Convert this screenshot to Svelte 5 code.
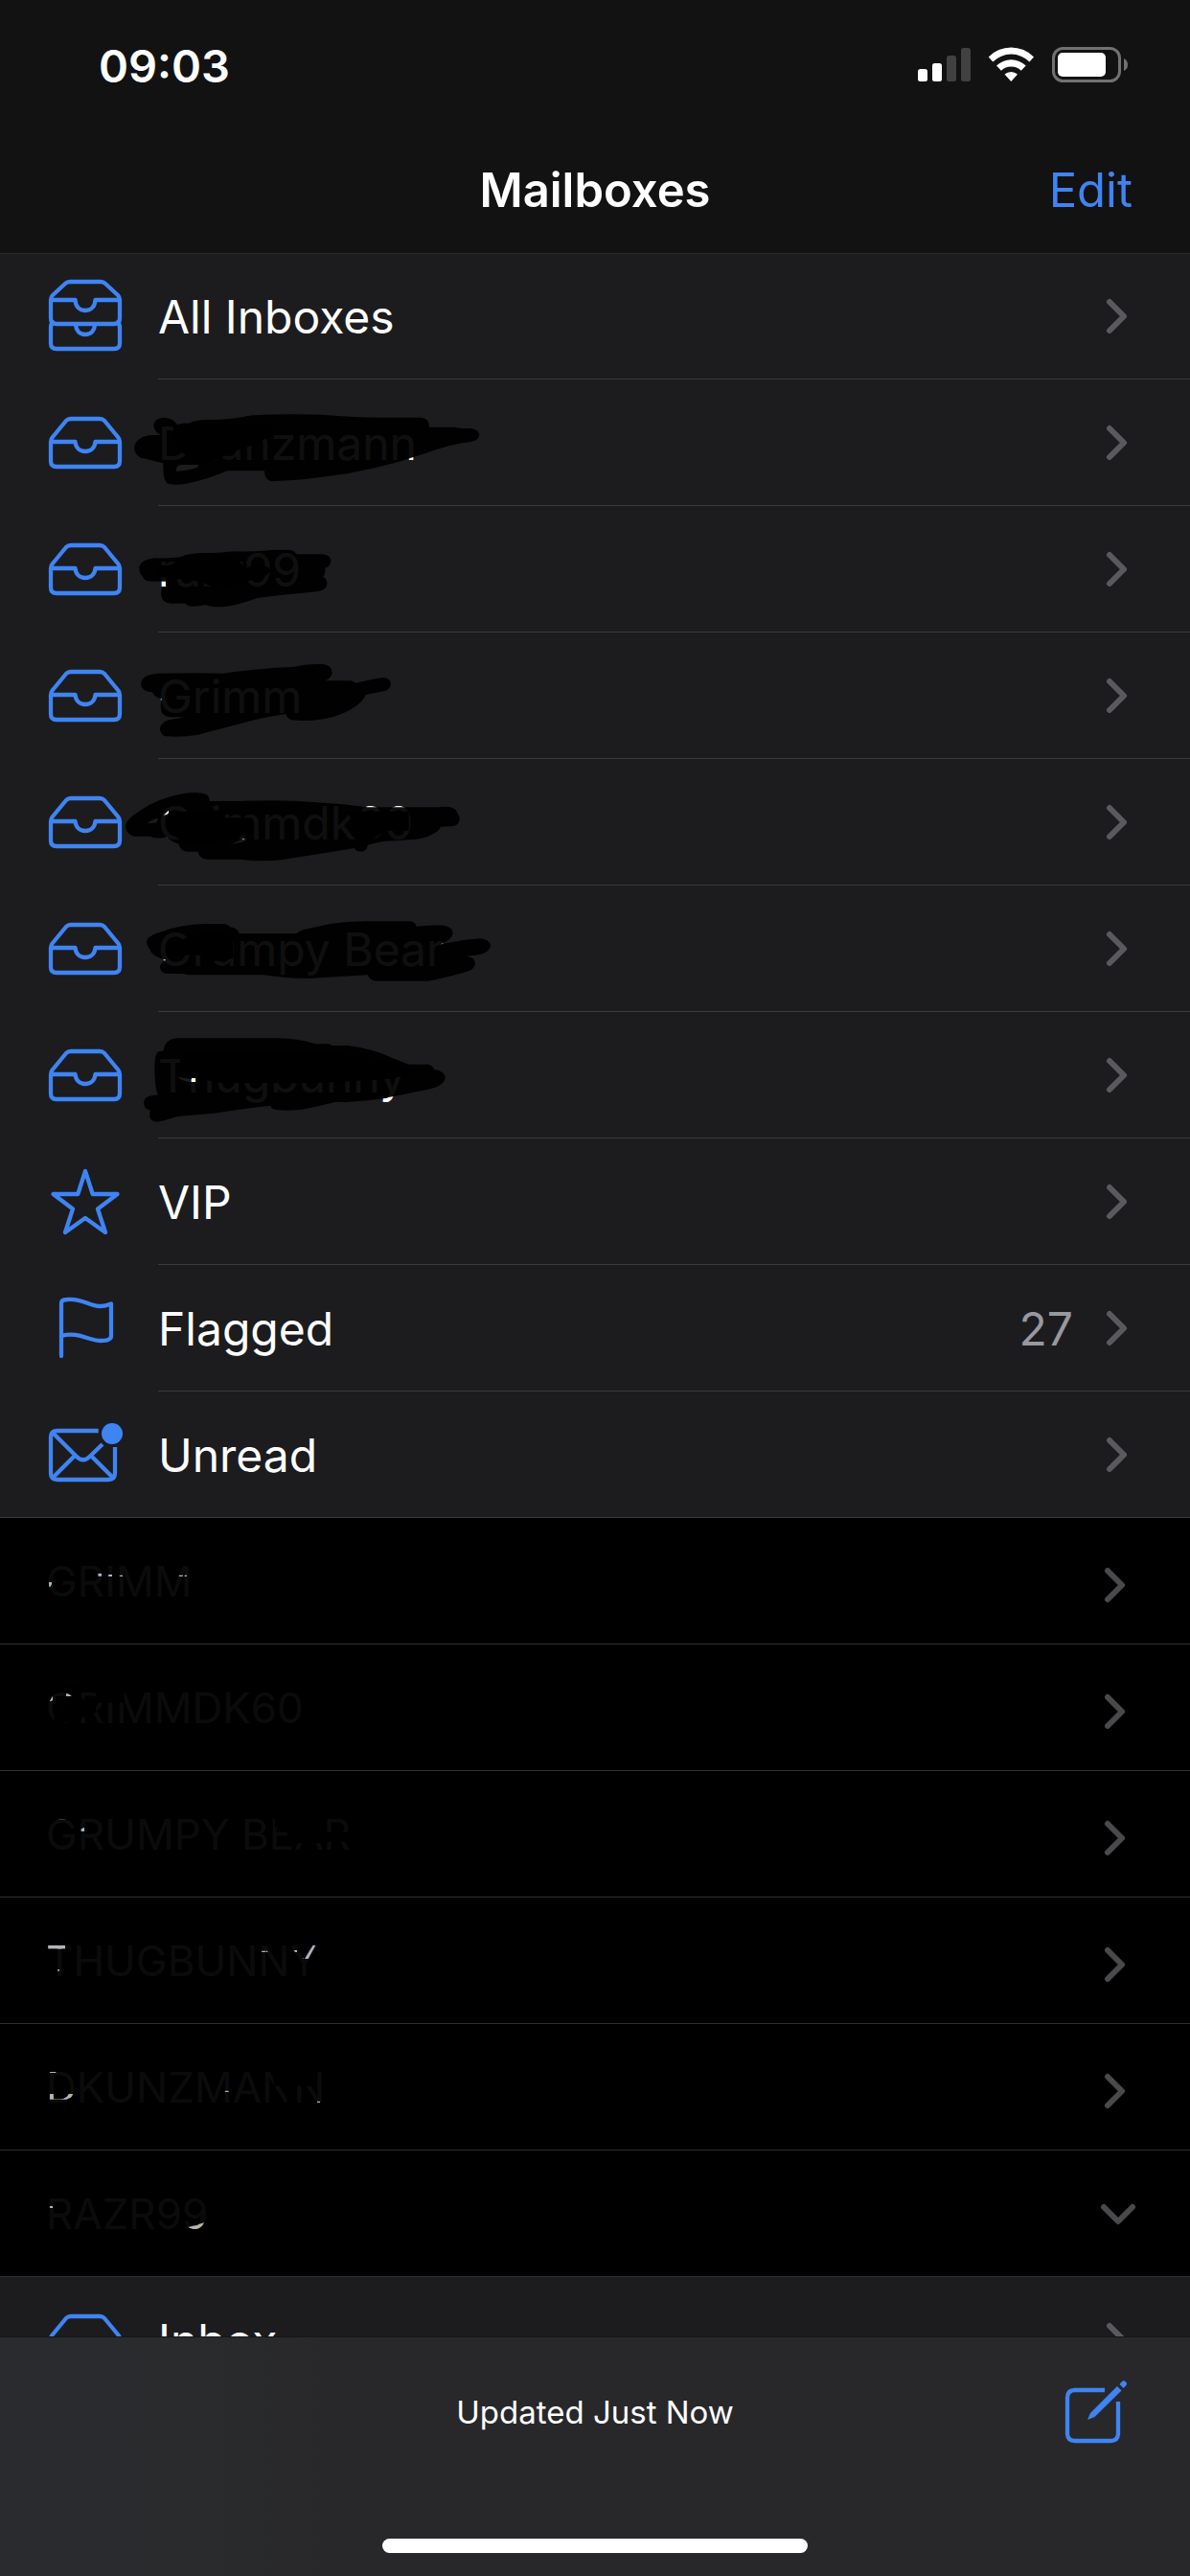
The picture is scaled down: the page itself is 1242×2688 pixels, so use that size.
<script>
	const mailboxes = [
		{ label: 'All Inboxes', icon: 'stack' },
		{
			label: 'Dkunzmann',
			icon: 'tray',
			top: 378,
			scribble:
				'M391 520Q395 498 425 498Q450 498 466 520Q480 512 500 515Q520 505 560 504Q620 505 700 490Q800 484 920 488Q1020 497 1100 497H1230Q1254 500 1254 527H1335Q1345 532 1385 531Q1410 535 1411 552Q1408 570 1380 574Q1320 580 1240 610Q1080 665 930 682Q850 694 760 697Q738 692 738 664H622Q560 690 500 703Q470 711 435 704Q420 695 421 640Q370 627 350 623Q330 610 330 590Q335 560 375 553Q400 552 415 551Q393 545 391 520ZM462 665Q460 645 480 645H530V652Q500 665 462 665Z',
			patch: 'M450 520H790Q760 570 650 600Q600 630 530 640Q480 610 465 590Z'
		},
		{
			label: 'razr99',
			icon: 'tray',
			top: -6,
			scribble:
				'M346 185Q352 160 400 157Q450 158 480 152Q500 140 560 141Q600 142 640 136Q720 137 760 132Q800 130 820 132Q835 136 837 145H920Q945 147 946 165Q945 185 928 188Q930 205 922 215Q936 225 934 240Q930 260 900 262Q800 272 715 282Q640 310 600 310Q565 310 555 303Q530 309 510 308Q495 306 490 299H445Q415 297 414 270L416 249H430V230H380Q360 228 357 215Q345 205 346 185Z',
			patch: 'M400 180H440Q500 150 640 150L680 190Q720 165 755 190Q760 215 700 225L600 260L540 230L410 215Z'
		},
		{
			label: 'Grimm',
			icon: 'tray',
			top: 390,
			scribble:
				'M351 550Q355 520 410 518Q520 515 610 518Q680 508 740 503Q790 498 830 498Q870 487 920 489Q950 492 950 515Q948 535 925 541H1010L1025 548Q1070 536 1110 531Q1134 533 1134 553Q1130 572 1110 574L1055 585Q1050 605 1010 630Q960 660 890 665Q850 668 825 664Q808 660 805 645Q740 655 690 668L530 710Q480 719 430 715Q411 710 411 690Q415 670 440 664Q470 658 490 655H440Q415 650 414 630Q412 605 416 597Q395 595 387 577Q352 575 351 550Z'
		},
		{
			label: 'Grimmdk60',
			icon: 'tray',
			top: 6,
			scribble:
				'M303 215Q305 195 345 170Q400 130 480 115Q530 106 555 116Q566 122 566 138H660Q800 132 900 142Q990 147 1060 157H1280Q1330 150 1340 170L1349 190Q1350 212 1330 216L1290 218Q1280 245 1210 258Q1150 262 1110 264Q1080 270 1062 275Q1058 295 1040 296Q1022 295 1020 285Q900 305 800 320Q740 330 660 320H560Q532 318 530 296H500Q475 296 470 272Q450 268 432 250Q400 258 380 248H330Q303 240 303 215ZM372 208Q385 194 405 192L400 205ZM422 182L438 167V178ZM628 273Q650 268 680 252V262Q655 271 628 273Z',
			patch: 'M440 170H610V190H700V230Q640 270 500 270L440 240ZM1000 170H1190V230H1110Q1060 280 1030 260Z'
		},
		{
			label: 'Grumpy Bear',
			icon: 'tray',
			top: 402,
			scribble:
				'M369 575Q372 558 420 545Q480 524 550 522H610Q625 524 630 532Q655 535 659 552H838Q850 540 900 532Q960 515 1060 514H1195Q1212 518 1214 530Q1260 526 1300 527Q1328 532 1328 552Q1325 572 1290 586Q1350 572 1410 568Q1445 570 1446 592Q1440 615 1400 620L1370 623Q1398 626 1398 648Q1395 668 1360 675Q1300 692 1250 701H1085Q1065 698 1062 682Q960 688 880 693Q800 693 735 682H500L480 678H430Q411 675 411 655Q415 640 430 635Q385 625 378 600Q369 590 369 575Z',
			patch: 'M440 590Q520 540 640 560V630Q600 640 540 640V620L430 620Z'
		},
		{
			label: 'Thugbunny',
			icon: 'tray',
			top: 18,
			scribble:
				'M421 140Q425 105 460 100H780Q840 100 900 118H940L950 123H1000Q1080 133 1140 163L1190 182H1250Q1265 185 1270 198Q1303 202 1304 225Q1300 250 1250 260Q1180 275 1100 290Q1020 300 960 300Q900 315 850 324Q800 328 775 324Q760 322 757 311Q640 325 580 335L465 345Q420 360 400 362Q380 360 378 342L380 325Q360 322 360 300Q363 282 385 280L405 277Q395 260 394 200Q393 140 410 141ZM468 222L510 229V225H524V237H512Q480 236 468 222Z',
			patch: 'M470 150H900Q1100 150 1200 200Q1200 220 1100 230L900 240H600L480 215Z'
		},
		{ label: 'VIP', icon: 'star' },
		{ label: 'Flagged', icon: 'flag', count: 27 },
		{ label: 'Unread', icon: 'envelope' }
	];

	const accounts = [
		{
			label: 'GRIMM',
			top: 72,
			gaps: 'M153 273h9v6l-5 9h-4zM306 246h12v8h-12zM339 249h12v6h-12zM371 251h13v4h-13zM558 251h27v4h-27z'
		},
		{
			label: 'GRIMMDK60',
			top: 468,
			gaps: 'M155 646l10 -18v14l-5 4zM207 622h18v8h-18z',
			patch: 'M170 630H250L260 640H300V680L250 700L170 720ZM300 610H390V650H300Z'
		},
		{
			label: 'GRUMPY BEAR',
			top: 864,
			gaps: 'M182 1010h22v5h-22zM252 1046l12 -5v12h-12z',
			patch: 'M860 1000H1010V1090H900V1040H860ZM1010 1055H1100V1085H1010Z'
		},
		{
			label: 'THUGBUNNY',
			top: 60,
			gaps: 'M150 206h54v15h-54zM948 252L972 206H990L965 252zM813 227h25v4h-25zM918 225h12v6h-12zM180 285h6v5h-6z'
		},
		{
			label: 'DKUNZMANN',
			top: 456,
			gaps: 'M155 602h20v7h-20zM155 675h13v14h30l15 -14h15v8l-20 9h-53zM703 665h13v4h-13zM993 698h9v4h-9z',
			patch: 'M850 600H990V650H860ZM890 650H930V710H900Z'
		},
		{
			label: 'RAZR99',
			top: 852,
			gaps: 'M155 1026h10v6h-10zM590 1092L652 1074V1106H590z',
			open: true
		}
	];
</script>

{#snippet icon(name)}
	<svg class="icon" viewBox="0 0 80 82" aria-hidden="true">
		{#if name === 'stack'}
			<path d="M5 24V43Q5 49 11 49H71Q77 49 77 43V24Q77 21 75 19L62 7Q60 5 57 5H25Q22 5 20 7L7 19Q5 21 5 24H30.5C31 31 35 35 41 35C47 35 51 31 51.5 24H77" />
			<path d="M7 47Q5 49 5 53V69Q5 75 11 75H71Q77 75 77 69V53Q77 49 75 47M31 50C31.5 56 35 60 41 60C47 60 50.5 56 51 50" />
		{:else if name === 'tray'}
			<path d="M5 40V60Q5 66 11 66H71Q77 66 77 60V40Q77 37 75 35L61 18Q59 16 56 16H26Q23 16 21 18L7 35Q5 37 5 40H30.5C31 46 35 50 41 50C47 50 51 46 51.5 40H77" />
		{:else if name === 'star'}
			<path d="M41 9L48.7 33H74.5L54 48.5L62 73L41 58L20 73L28 48.5L7.5 33H33.3Z" />
		{:else if name === 'flag'}
			<path d="M16 70V15Q16 11 22 11C38 9 44 18 57 18Q62 18 68 15.5V49Q68 54 57 54C44 54 34 44 16 49" />
		{:else if name === 'envelope'}
			<path class="butt" d="M54.7 16H12Q5 16 5 23V60Q5 67 12 67H65Q72 67 72 60V33" />
			<path class="butt" d="M7 18L32 43Q38.7 49.5 45.5 43L59 30M29 43L7 65M48 43L70 65" />
			<circle cx="69" cy="19" r="11" />
		{/if}
	</svg>
{/snippet}

{#snippet chevron(d)}
	<svg class="chevron" viewBox="0 0 48 47" aria-hidden="true"><path {d} /></svg>
{/snippet}

{#snippet mailbox(box)}
	<li>
		<button class="mailbox">
			{@render icon(box.icon)}
			<span class="body">
				<span class="label">{box.label}</span>
				{#if box.count}<span class="count">{box.count}</span>{/if}
				{@render chevron('M18 9L33 24L18 39')}
			</span>
			{#if box.scribble}
				<svg class="marker" viewBox="0 {box.top} 1560 396" aria-hidden="true">
					<path d={box.scribble} />
					{#if box.patch}<path d={box.patch} />{/if}
				</svg>
			{/if}
		</button>
	</li>
{/snippet}

<div class="screen">
	<header>
		<div class="status">
			<time>09:03</time>
			<svg class="indicators" viewBox="0 0 220 38" aria-hidden="true">
				<rect x="1" y="23" width="10" height="13" rx="2.5" />
				<rect x="16" y="17" width="10" height="19" rx="2.5" />
				<rect class="dim" x="31" y="9" width="10" height="27" rx="2.5" />
				<rect class="dim" x="46" y="1" width="10" height="35" rx="2.5" />
				<path d="M74.7 10.5A33 33 0 0 1 122 10.5L117.5 15.5A27 27 0 0 0 79.3 15.5Z" />
				<path d="M83 19.5A22 22 0 0 1 113.7 19.5L108.7 24.7A15 15 0 0 0 88 24.7Z" />
				<path d="M91.5 28.5A10 10 0 0 1 105 28.5L98.3 36Z" />
				<rect class="outline" x="142.5" y="1.5" width="69" height="34" rx="10" />
				<rect x="147" y="6" width="50" height="25" rx="5" />
				<path class="nub" d="M216 12Q220 14 220 18.5Q220 23 216 25Z" />
			</svg>
		</div>
		<nav>
			<h1>Mailboxes</h1>
			<button class="edit">Edit</button>
		</nav>
	</header>

	<main>
		<ul class="group">
			{#each mailboxes as box}
				{@render mailbox(box)}
			{/each}
		</ul>
		<ul>
			{#each accounts as account}
				<li>
					<button class="account" aria-expanded={!!account.open}>
						<span class="label">{account.label}</span>
						{@render chevron(account.open ? 'M12 17L27 32L42 17' : 'M16 13L31 28L16 43')}
						<svg class="marker wide" viewBox="0 {account.top} 1260 396" aria-hidden="true">
							<path d="M120 {account.top + 80}H1140V{account.top + 320}H120Z{account.gaps}" />
							{#if account.patch}<path d={account.patch} />{/if}
						</svg>
					</button>
				</li>
			{/each}
		</ul>
		<ul class="group">
			{@render mailbox({ label: 'Inbox', icon: 'tray' })}
		</ul>
	</main>

	<footer>
		<div class="toolbar">
			<p>Updated Just Now</p>
			<button class="compose" aria-label="Compose">
				<svg viewBox="0 0 64 66" aria-hidden="true">
					<path class="sheet" d="M41 10H10Q2 10 2 18V55Q2 63 10 63H47Q55 63 55 55V22" />
					<path d="M23 41L26 34L54 6L58.5 10.5L30.5 38Z" />
					<path d="M56.5 4L59 1Q61 -0.5 63 1.5Q65 3.5 63 5.5L60.5 8Z" />
				</svg>
			</button>
		</div>
		<div class="home"></div>
	</footer>
</div>

<style>
	:global(body) {
		background: #000;
	}

	.screen {
		display: flex;
		flex-direction: column;
		height: 100vh;
		font-family: Inter, 'Liberation Sans', sans-serif;
		color: #fff;
		background: #000;
	}

	button {
		border: 0;
		padding: 0;
		background: none;
		color: inherit;
		font: inherit;
		text-align: left;
	}

	header {
		position: relative;
		z-index: 1;
		flex: none;
		background: #121212;
		box-shadow: 0 1px 0 #2b2b2c;
	}

	.status {
		display: flex;
		align-items: center;
		justify-content: space-between;
		height: 136px;
		padding: 0 65px 0 103px;
	}

	time {
		font-size: 47px;
		font-weight: 600;
	}

	.indicators {
		width: 220px;
		height: 38px;
		fill: #fff;
	}

	.indicators .dim {
		fill: #414141;
	}

	.indicators .outline {
		fill: none;
		stroke: #717171;
		stroke-width: 3;
	}

	.indicators .nub {
		fill: #717171;
	}

	nav {
		display: grid;
		grid-template-columns: 1fr auto 1fr;
		align-items: center;
		height: 124px;
		padding: 0 60px 4px;
	}

	h1 {
		grid-column: 2;
		margin: 0;
		font-size: 49px;
		font-weight: 600;
	}

	.edit {
		justify-self: end;
		font-size: 49px;
		color: #3f84f3;
	}

	main {
		flex: 1;
		min-height: 0;
		overflow: hidden auto;
		scrollbar-width: none;
	}

	ul {
		margin: 0;
		padding: 0;
		list-style: none;
	}

	.group {
		background: #1c1c1e;
		border-bottom: 1px solid #39393b;
	}

	.mailbox,
	.account {
		position: relative;
		display: flex;
		align-items: center;
		width: 100%;
	}

	.mailbox {
		gap: 37px;
		padding-left: 48px;
		font-size: 48px;
	}

	.icon {
		flex: none;
		width: 80px;
		height: 82px;
		fill: none;
		stroke: #3f84f3;
		stroke-width: 4.3;
		stroke-linecap: round;
		stroke-linejoin: round;
	}

	.icon .butt {
		stroke-linecap: butt;
	}

	.icon circle {
		fill: #3f84f3;
		stroke: none;
	}

	.body {
		display: flex;
		flex: 1;
		align-items: center;
		height: 131px;
		padding-right: 54px;
		border-bottom: 1px solid #3a3a3c;
	}

	li:last-child .body {
		border-bottom: 0;
	}

	.label {
		flex: 1;
	}

	.body .label,
	.count {
		padding-top: 2px;
	}

	.count {
		margin-right: 20px;
		color: #98989f;
	}

	.chevron {
		flex: none;
		width: 48px;
		height: 47px;
		fill: none;
		stroke: #5a5a5e;
		stroke-width: 6;
		stroke-linecap: round;
		stroke-linejoin: round;
	}

	.account {
		height: 132px;
		padding: 0 54px 0 48px;
		border-bottom: 1px solid #2f2f31;
		font-size: 44px;
		color: #b4b4b6;
	}

	.account .chevron {
		stroke: #4a4a4c;
	}

	/* marker strokes lie over the names and let a trace of them through */
	.marker {
		position: absolute;
		top: 0;
		left: 30px;
		width: 520px;
		height: 132px;
		fill: #000;
		fill-opacity: 0.94;
		fill-rule: evenodd;
	}

	.marker.wide {
		left: 0;
		width: 420px;
	}

	footer {
		flex: none;
		display: flex;
		flex-direction: column;
		align-items: center;
		justify-content: space-between;
		height: 225px;
		padding-bottom: 24px;
		border-top: 1px solid #161617;
		background: linear-gradient(90deg, #292b2f 0%, #2a2b2d 14%, #28282a 30%);
	}

	.toolbar {
		display: grid;
		grid-template-columns: 1fr auto 1fr;
		align-items: center;
		box-sizing: border-box;
		width: 100%;
		height: 156px;
		padding: 0 66px;
	}

	.toolbar p {
		grid-column: 2;
		margin: 0;
		font-size: 33px;
	}

	.compose {
		justify-self: end;
		line-height: 0;
	}

	.compose svg {
		width: 64px;
		height: 66px;
		overflow: visible;
		fill: #3f84f3;
	}

	.compose .sheet {
		fill: none;
		stroke: #3f84f3;
		stroke-width: 4.3;
	}

	.home {
		width: 444px;
		height: 15px;
		border-radius: 8px;
		background: #fff;
	}
</style>
